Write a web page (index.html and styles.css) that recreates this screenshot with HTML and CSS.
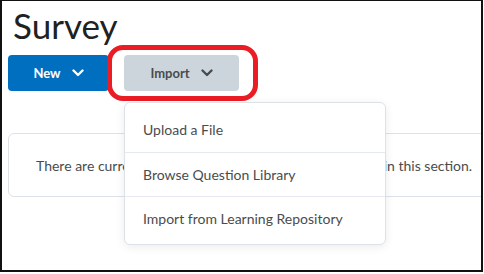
FILE: index.html
```html
<!DOCTYPE html>
<html>
<head lang="en">
    <meta charset="UTF-8">
    <title>Survey</title>
    <link rel="stylesheet" href="styles.css">
</head>
<body>
    <div class="frame">
        <h1 class="page-title">Survey</h1>
        <div class="toolbar">
            <button class="btn btn-primary">New
                <svg class="chev" width="12" height="8" viewBox="0 0 12 8"><polyline points="1.5,1.5 6,6 10.5,1.5" fill="none" stroke="#fff" stroke-width="2.4" stroke-linecap="round" stroke-linejoin="round"/></svg>
            </button>
            <div class="import-wrap">
                <button class="btn btn-secondary">Import
                    <svg class="chev" width="12" height="8" viewBox="0 0 12 8"><polyline points="1.5,1.5 6,6 10.5,1.5" fill="none" stroke="#494c4e" stroke-width="2.4" stroke-linecap="round" stroke-linejoin="round"/></svg>
                </button>
                <div class="highlight"></div>
                <ul class="menu">
                    <li>Upload a File</li>
                    <li>Browse Question Library</li>
                    <li>Import from Learning Repository</li>
                </ul>
            </div>
        </div>
        <div class="empty-card">
            There are currently no survey questions or question sets in this section.
        </div>
    </div>
</body>
</html>
```

FILE: styles.css
```css
*{
    margin:0;  padding:0;
    box-sizing: border-box;
}
body{
    font-family: Lato, "Open Sans", sans-serif;
    color:#202122;
    background:#fff;
}
.frame{
    width:483px;
    height:272px;
    border-top:1px solid #111;
    border-left:2px solid #111;
    border-right:2px solid #111;
    border-bottom:2px solid #111;
    padding-left:6px;
    overflow:hidden;
}
.page-title{
    font-size:35px;
    font-weight:400;
    line-height:40px;
    margin:4px 0 0 5px;
    color:#202122;
}
.toolbar{
    display:flex;
    gap:15px;
    margin-top:10px;
}
.btn{
    height:36px;
    border:none;
    border-radius:4px;
    font-family: Lato, sans-serif;
    font-size:13px;
    font-weight:700;
    display:flex;
    align-items:center;
    justify-content:center;
    gap:11px;
}
.btn-primary{
    width:101px;
    background:#006fbf;
    color:#fff;
}
.btn-secondary{
    width:115px;
    background:#cdd5dc;
    color:#494c4e;
}
.chev{
    display:block;
}
.import-wrap{
    position:relative;
}
.highlight{
    position:absolute;
    left:-17px;
    top:-10px;
    right:-19px;
    bottom:-10px;
    border:5px solid #ea1c24;
    border-radius:16px;
}
.menu{
    position:absolute;
    left:0;
    top:47px;
    width:262px;
    list-style:none;
    background:#fff;
    border:1px solid #dde2e8;
    border-radius:6px;
    box-shadow:0 2px 10px rgba(0,0,0,0.08);
    padding:5px 0 4px;
    z-index:2;
}
.menu li{
    height:44px;
    line-height:44px;
    padding-left:18px;
    font-size:14px;
    color:#494c4e;
    border-top:1px solid #e6eaf0;
}
.menu li:first-child{
    border-top:none;
}
.empty-card{
    width:520px;
    height:64px;
    margin-top:42px;
    border:1px solid #dde2e8;
    border-radius:6px;
    padding-left:27px;
    display:flex;
    align-items:center;
    font-size:14px;
    color:#494c4e;
    white-space:nowrap;
}
```
